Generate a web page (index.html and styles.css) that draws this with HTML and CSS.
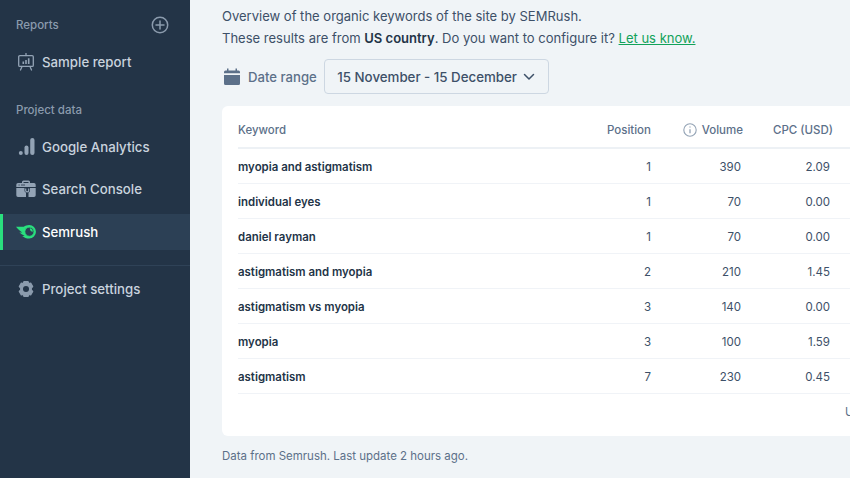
FILE: index.html
```html
<!DOCTYPE html>
<html lang="en">
<head>
<meta charset="utf-8">
<title>Semrush keywords</title>
<link rel="stylesheet" href="styles.css">
</head>
<body>
<div class="app">
  <aside class="sidebar">
    <div class="section-head first">
      <span>Reports</span>
      <svg class="add" viewBox="0 0 18 18" width="18" height="18"><circle cx="9" cy="9" r="7.7" fill="none" stroke="#8b9bad" stroke-width="1.5"/><path d="M9 5v8M5 9h8" stroke="#8b9bad" stroke-width="1.5" stroke-linecap="round"/></svg>
    </div>
    <a class="nav-item">
      <svg class="ico" viewBox="0 0 20 18" width="20" height="18"><path d="M10 .6v2" stroke="#93a3b5" stroke-width="1.300" stroke-linecap="round"/><rect x="2.700" y="2.600" width="14.600" height="10.800" rx="1.200" fill="none" stroke="#93a3b5" stroke-width="1.300"/><path d="M6 13.500 4.500 17M14 13.500l1.500 3.500" fill="none" stroke="#93a3b5" stroke-width="1.300" stroke-linecap="round"/><path d="M6.500 8.500h1.600v2.500H6.500zM9.200 7h1.600v4H9.200zM11.900 5.300h1.600V11h-1.600z" fill="#93a3b5"/></svg>
      <span>Sample report</span>
    </a>
    <div class="section-head"><span>Project data</span></div>
    <a class="nav-item">
      <svg class="ico" viewBox="0 0 20 18" width="20" height="18"><circle cx="4.800" cy="15" r="2" fill="#93a3b5"/><rect x="8.500" y="7.500" width="4" height="9.500" rx="2" fill="#93a3b5"/><rect x="14.200" y="0" width="4.300" height="17" rx="2.100" fill="#93a3b5"/></svg>
      <span>Google Analytics</span>
    </a>
    <a class="nav-item">
      <svg class="ico" viewBox="0 0 20 18" width="20" height="18"><path d="M6 3V2a1.500 1.500 0 0 1 1.500-1.500h5A1.500 1.500 0 0 1 14 2v1h-1.500V2h-5v1z" fill="#93a3b5"/><path d="M2 3h16a1.700 1.700 0 0 1 1.700 1.700V7H.3V4.700A1.700 1.700 0 0 1 2 3zM.3 8h8.200v2.500c0 1 .6 1.800 1.500 2.100v4.400H2A1.700 1.700 0 0 1 .3 15.300zM12.500 17v-4.400c.9-.3 1.500-1.100 1.500-2.100V8h5.700v7.300A1.700 1.700 0 0 1 18 17z" fill="#93a3b5"/><path d="M9.700 8.500v2c0 .8.700 1.300 1.500 1.300s1.500-.5 1.500-1.300v-2" fill="none" stroke="#93a3b5" stroke-width="1.200"/><path d="M2.500 5h1.200M5 5h4" stroke="#233447" stroke-width=".8"/></svg>
      <span>Search Console</span>
    </a>
    <a class="nav-item active">
      <svg class="ico" viewBox="0 0 20 14" width="20" height="14"><path d="M0 1.800h7.800C9.300.7 11 0 13.200 0a6.700 6.700 0 0 1 0 13.500c-2.800 0-5-.9-7-2.600 .9.100 1.700.1 2.500 0C6.600 9.700 4.700 8.500 3.400 7.200c1 .2 1.900.3 2.800.2C4 6 2 4.200 0 1.800z" fill="#2adf7e"/><circle cx="13.400" cy="6.700" r="4.500" fill="#2c4055"/><circle cx="13.400" cy="6.700" r="4.500" fill="none" stroke="#2adf7e" stroke-width=".7"/><path d="M13.800 3.300a3.500 3.500 0 0 1 3 3.400c-1.700 0-3-1.400-3-3.400z" fill="#2adf7e"/></svg>
      <span>Semrush</span>
    </a>
    <div class="divider"></div>
    <a class="nav-item">
      <svg class="ico" viewBox="0 0 20 18" width="20" height="18"><path d="M8 1.500h4l.7 2 2-.4 2 3.400-1.400 1.600v1.800l1.400 1.600-2 3.400-2-.4-.7 2H8l-.7-2-2 .4-2-3.400 1.400-1.600V8.100L3.300 6.500l2-3.400 2 .4z" fill="#8b9bad" stroke="#8b9bad" stroke-width="1.200" stroke-linejoin="round"/><circle cx="10" cy="9" r="3" fill="#233447"/></svg>
      <span>Project settings</span>
    </a>
  </aside>
  <main class="main">
    <p class="intro">Overview of the organic keywords of the site by SEMRush.</p>
    <p class="intro">These results are from <strong>US country</strong>. Do you want to configure it? <a class="link">Let us know.</a></p>
    <div class="range">
      <svg class="cal" viewBox="0 0 16 17" width="16" height="17"><path d="M3 .5h1.500v2H11.500v-2H13v2h1.500A1.500 1.500 0 0 1 16 4v1.200H0V4a1.500 1.500 0 0 1 1.500-1.500H3zM0 7h16v8.500a1.500 1.500 0 0 1-1.500 1.500h-13A1.500 1.500 0 0 1 0 15.500z" fill="#5c7089"/></svg>
      <span class="range-label">Date range</span>
      <button class="range-btn">15 November - 15 December
        <svg viewBox="0 0 12 8" width="12" height="8"><path d="M1.500 1.500 6 6l4.500-4.500" fill="none" stroke="#3d5068" stroke-width="1.500" stroke-linecap="round" stroke-linejoin="round"/></svg>
      </button>
    </div>
    <section class="card">
      <div class="row head">
        <div class="kw">Keyword</div>
        <div class="num pos">Position</div>
        <div class="num vol"><svg viewBox="0 0 14 14" width="14" height="14"><circle cx="7" cy="7" r="6.200" fill="none" stroke="#93a3b5" stroke-width="1.100"/><path d="M7 6.200v4M7 3.400v1.200" stroke="#93a3b5" stroke-width="1.300"/></svg>Volume</div>
        <div class="num cpc">CPC (USD)</div>
      </div>
      <div class="row"><div class="kw">myopia and astigmatism</div><div class="num pos">1</div><div class="num vol">390</div><div class="num cpc">2.09</div></div>
      <div class="row"><div class="kw">individual eyes</div><div class="num pos">1</div><div class="num vol">70</div><div class="num cpc">0.00</div></div>
      <div class="row"><div class="kw">daniel rayman</div><div class="num pos">1</div><div class="num vol">70</div><div class="num cpc">0.00</div></div>
      <div class="row"><div class="kw">astigmatism and myopia</div><div class="num pos">2</div><div class="num vol">210</div><div class="num cpc">1.45</div></div>
      <div class="row"><div class="kw">astigmatism vs myopia</div><div class="num pos">3</div><div class="num vol">140</div><div class="num cpc">0.00</div></div>
      <div class="row"><div class="kw">myopia</div><div class="num pos">3</div><div class="num vol">100</div><div class="num cpc">1.59</div></div>
      <div class="row"><div class="kw">astigmatism</div><div class="num pos">7</div><div class="num vol">230</div><div class="num cpc">0.45</div></div>
      <div class="pager">Upgrade</div>
    </section>
    <p class="foot">Data from Semrush. Last update 2 hours ago.</p>
  </main>
</div>
</body>
</html>
```
FILE: styles.css
```css
* { box-sizing: border-box; }
html, body { margin: 0; height: 100%; overflow: hidden; }
body { font-family: Inter, "Liberation Sans", sans-serif; background: #f0f4f7; color: #233447; }
.app { display: flex; width: 850px; height: 478px; overflow: hidden; }
.sidebar { width: 190px; flex: none; background: #233447; color: #c9d3de; display: flex; flex-direction: column; }
.section-head { display: flex; align-items: center; justify-content: space-between; padding: 0 21px 0 16px; height: 18px; font-size: 11.5px; font-weight: 500; color: #8b9bad; margin-top: 14px; margin-bottom: 10px; }
.section-head.first { margin-top: 16px; margin-bottom: 10px; }
.nav-item { height: 36px; margin-bottom: 6.500px; display: flex; align-items: center; gap: 6px; padding-left: 16px; font-size: 13.250px; font-weight: 500; position: relative; }
.nav-item .ico { flex: none; width: 20px; }
.nav-item.active { background: #2c4055; color: #fff; }
.nav-item.active::before { content: ""; position: absolute; left: 0; top: 0; bottom: 0; width: 3px; background: #2adf7e; }
.divider { height: 1px; background: #2f4257; margin: 9px 0 5px; }
.main { flex: 1; min-width: 0; padding: 5px 0 0 32px; }
.intro { margin: 0; font-size: 13.030px; line-height: 22px; color: #3d5068; white-space: nowrap; }
.intro strong { font-weight: 600; color: #233447; }
.link { color: #12a25a; text-decoration: underline; }
.range { display: flex; align-items: center; margin-top: 10px; height: 35px; }
.cal { margin-left: 2px; }
.range-label { font-size: 13.150px; font-weight: 500; color: #5c7089; margin-left: 8px; }
.range-btn { margin-left: 7px; height: 35px; width: 225px; display: flex; align-items: center; justify-content: space-between; padding: 0 13px 0 12.500px; background: transparent; border: 1px solid #cdd7e2; border-radius: 4px; font: 500 13.300px Inter, sans-serif; color: #3d5068; }
.card { margin-top: 12px; width: 660px; height: 330px; background: #fff; border-radius: 6px; padding: 7px 0 0 16px; overflow: hidden; }
.row { display: flex; align-items: center; height: 35px; padding-top: 1px; border-bottom: 1px solid #f0f3f7; font-size: 11.500px; color: #3d5068; }
.row.head { height: 36px; padding-top: 0; padding-bottom: 1px; border-bottom: 2px solid #edf1f5; font-weight: 500; color: #5c7089; }
.kw { width: 330px; font-size: 11.450px; font-weight: 600; color: #233447; }
.head .kw { font-weight: 500; color: #5c7089; }
.num { text-align: right; }
.pos { width: 83px; }
.vol { width: 90px; display: flex; justify-content: flex-end; align-items: center; gap: 5px; }
.cpc { width: 89px; }
.head .vol { width: 92px; }
.head .cpc { width: 90px; }
.pager { margin: 11px 0 0 607px; font-size: 11.500px; color: #5c7089; white-space: nowrap; }
.foot { margin: 13px 0 0; font-size: 11.480px; color: #5c7089; }
```
